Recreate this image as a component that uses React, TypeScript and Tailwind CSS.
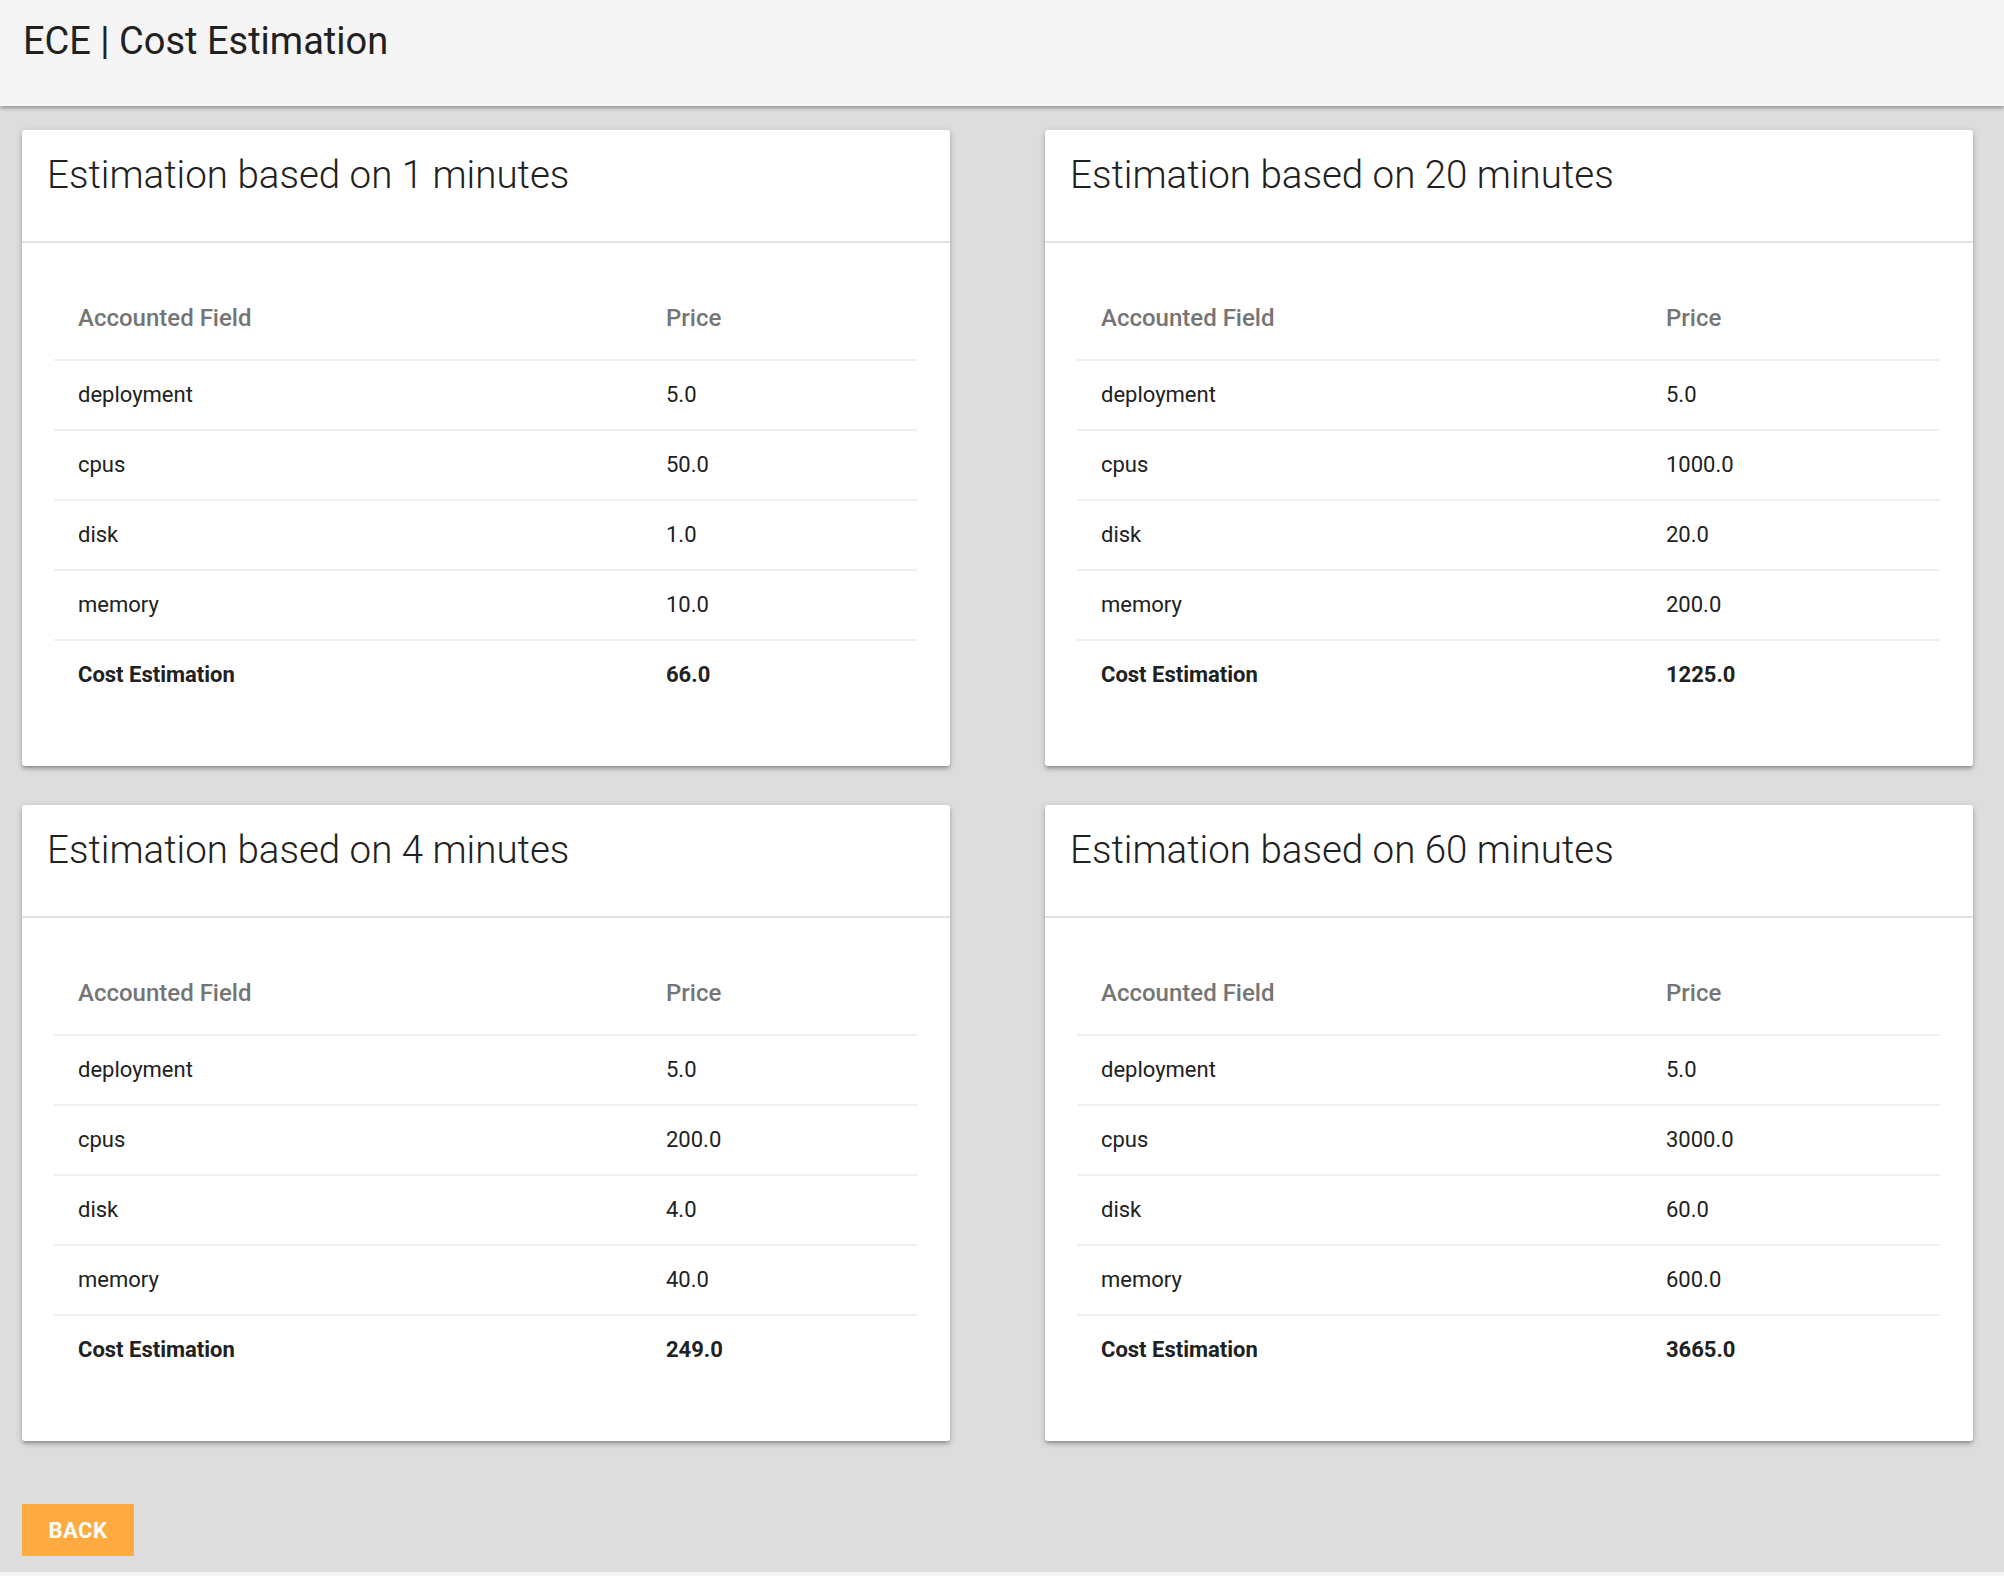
import React from "react";

type Row = { field: string; price: string };

type Estimation = {
  minutes: number;
  rows: Row[];
  total: string;
  colClass: string;
};

const estimations: Estimation[] = [
  {
    minutes: 1,
    rows: [
      { field: "deployment", price: "5.0" },
      { field: "cpus", price: "50.0" },
      { field: "disk", price: "1.0" },
      { field: "memory", price: "10.0" },
    ],
    total: "66.0",
    colClass: "w-[588px]",
  },
  {
    minutes: 20,
    rows: [
      { field: "deployment", price: "5.0" },
      { field: "cpus", price: "1000.0" },
      { field: "disk", price: "20.0" },
      { field: "memory", price: "200.0" },
    ],
    total: "1225.0",
    colClass: "w-[565px]",
  },
  {
    minutes: 4,
    rows: [
      { field: "deployment", price: "5.0" },
      { field: "cpus", price: "200.0" },
      { field: "disk", price: "4.0" },
      { field: "memory", price: "40.0" },
    ],
    total: "249.0",
    colClass: "w-[588px]",
  },
  {
    minutes: 60,
    rows: [
      { field: "deployment", price: "5.0" },
      { field: "cpus", price: "3000.0" },
      { field: "disk", price: "60.0" },
      { field: "memory", price: "600.0" },
    ],
    total: "3665.0",
    colClass: "w-[565px]",
  },
];

function EstimationCard({ estimation }: { estimation: Estimation }) {
  return (
    <div className="bg-white rounded-[3px] h-[636px] shadow-[0_3px_3px_0_rgba(0,0,0,0.14),0_4px_2px_-3px_rgba(0,0,0,0.12),0_2px_7px_0_rgba(0,0,0,0.2)]">
      {/* Card title */}
      <div className="box-border h-[113px] pt-[22px] px-[25px] border-b-2 border-[#e2e2e2]">
        <h2 className="text-[38.5px] leading-[46px] font-light text-[#212121]">
          Estimation based on {estimation.minutes} minutes
        </h2>
      </div>

      {/* Card table */}
      <div className="pt-[30px] pb-[56px] pl-[32px] pr-[33px]">
        <table className="w-full table-fixed border-collapse text-[22px] leading-[36px]">
          <colgroup>
            <col className={estimation.colClass} />
            <col />
          </colgroup>
          <thead>
            <tr className="border-b-2 border-[#efefef]">
              <th className="text-left text-[24px] font-medium text-[#757575] px-6 pt-[27px] pb-[23px]">Accounted Field</th>
              <th className="text-left text-[24px] font-medium text-[#757575] px-6 pt-[27px] pb-[23px]">Price</th>
            </tr>
          </thead>
          <tbody className="text-[#212121]">
            {estimation.rows.map((row) => (
              <tr key={row.field} className="border-b-2 border-[#efefef]">
                <td className="px-6 py-4">{row.field}</td>
                <td className="px-6 py-4">{row.price}</td>
              </tr>
            ))}
            <tr>
              <td className="px-6 py-4 font-bold">Cost Estimation</td>
              <td className="px-6 py-4 font-bold">{estimation.total}</td>
            </tr>
          </tbody>
        </table>
      </div>
    </div>
  );
}

export default function App() {
  return (
    <div className="min-h-screen bg-[#f5f5f5] font-[family-name:Roboto,sans-serif]">
      {/* Top bar */}
      <header className="relative z-10 h-[106px] bg-[#f5f5f5] pt-[18px] pl-[23px] shadow-[0_2px_4px_rgba(0,0,0,0.35)]">
        <h1 className="text-[38px] leading-[46px] font-normal text-[#212121]">ECE | Cost Estimation</h1>
      </header>

      {/* Main */}
      <main className="h-[1466px] bg-[#dddddd] pt-[24px] pl-[22px] pr-[31px]">
        <div className="grid grid-cols-[928px_928px] gap-x-[95px] gap-y-[39px]">
          {estimations.map((e) => (
            <EstimationCard key={e.minutes} estimation={e} />
          ))}
        </div>

        <div className="mt-[63px]">
          <button className="w-[112px] h-[52px] bg-[#ffab40] text-white text-[22px] font-bold uppercase tracking-[0.5px]">
            Back
          </button>
        </div>
      </main>
    </div>
  );
}
